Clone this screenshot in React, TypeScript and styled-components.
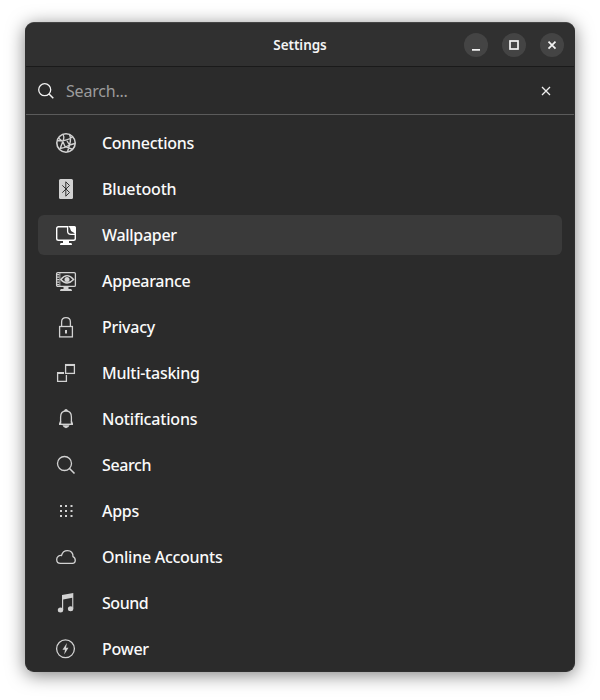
import React from "react";
import styled, { createGlobalStyle } from "styled-components";

const GlobalStyle = createGlobalStyle`
  * { box-sizing: border-box; }
  html, body { margin: 0; background: #fff; overflow: hidden; }
`;

const Desktop = styled.div`
  width: 600px;
  height: 700px;
  padding: 22px 25px 28px;
  background: #fff;
  font-family: "Noto Sans", "Open Sans", sans-serif;
`;

const Window = styled.main`
  display: flex;
  flex-direction: column;
  height: 650px;
  border: 1px solid #2f2f2f;
  border-top-color: #454545;
  border-radius: 9px;
  overflow: hidden;
  background: #2b2b2b;
  box-shadow: 0 3px 18px rgba(0, 0, 0, 0.5);
`;

const TitleBar = styled.header`
  display: grid;
  grid-template-columns: 1fr auto 1fr;
  align-items: center;
  flex: none;
  height: 44px;
  padding: 0 10px;
  background: #303030;
  border-bottom: 1px solid #1a1a1a;
`;

const Title = styled.h1`
  grid-column: 2;
  margin: 0;
  color: #f4f4f4;
  font-size: 13.5px;
  line-height: 20px;
  font-weight: 600;
  letter-spacing: -0.05px;
`;

const Controls = styled.div`
  display: flex;
  justify-content: flex-end;
  gap: 14px;
`;

const ControlButton = styled.button`
  display: grid;
  place-items: center;
  width: 24px;
  height: 24px;
  padding: 0;
  border: 0;
  border-radius: 50%;
  background: #444;
  color: #f2f2f2;
`;

const SearchBar = styled.div`
  display: flex;
  align-items: center;
  flex: none;
  height: 48px;
  padding: 0 22px 0 12px;
  border-bottom: 1px solid #5b5b5b;
  color: #f2f2f2;
`;

const SearchInput = styled.input`
  flex: 1;
  min-width: 0;
  margin-left: 12px;
  padding: 0;
  border: 0;
  outline: 0;
  background: transparent;
  color: #fff;
  font: 400 16px/24px "Noto Sans", sans-serif;
  letter-spacing: -0.2px;
  &::placeholder { color: #9c9c9c; opacity: 1; }
`;

const ClearButton = styled.button`
  display: flex;
  padding: 0;
  border: 0;
  background: none;
  color: #eee;
`;

const List = styled.nav`
  display: flex;
  flex-direction: column;
  gap: 6px;
  padding: 8px 12px 0;
`;

const Row = styled.a<{ $active?: boolean }>`
  display: flex;
  align-items: center;
  gap: 26px;
  flex: none;
  height: 40px;
  padding-left: 18px;
  border-radius: 6px;
  background: ${(p) => (p.$active ? "#3a3a3a" : "transparent")};
  color: ${(p) => (p.$active ? "#fff" : "#d2d2d2")};
`;

const Label = styled.span<{ $tracking: number }>`
  color: #fafafa;
  font-size: 16px;
  line-height: 24px;
  font-weight: 500;
  white-space: nowrap;
  letter-spacing: ${(p) => p.$tracking}px;
`;

const Glyph = styled.svg`
  display: block;
  flex: none;
  overflow: visible;
  fill: none;
  stroke: currentColor;
  stroke-width: 1.3;
`;

const solid = { fill: "currentColor", stroke: "none" };

const icons: Record<string, React.ReactNode> = {
  Connections: (
    <g>
      <circle cx="10" cy="10" r="9.2" strokeWidth="1.6" />
      <path d="M7 1.500Q8.500 4 7.500 6.500L4 16M1 7.500Q9 9 16.500 4M13.500 1.500Q15.500 6 13.500 12L11.500 19M2.500 5L7 9L9 13.500L17 16.500M13.500 12L19 10.500M4 15.500Q9 15 13.500 12L11 8" strokeWidth="1.400" />
    </g>
  ),
  Bluetooth: (
    <g>
      <rect x="3" y="0" width="14" height="20" rx="1.5" {...solid} />
      <path d="M6.300 6.300L13.500 13.500L9.800 17.200V2.800L13.500 6.500L6.300 13.700" stroke="#2b2b2b" strokeWidth=".95" />
    </g>
  ),
  Wallpaper: (
    <g>
      <path d="M12 1.700H2.500Q.7 1.700 .7 3.500V13.500Q.7 15.300 2.500 15.300H17.500Q19.300 15.300 19.300 13.500V8" strokeWidth="1.4" />
      <path d="M12 1H18.500Q20 1 20 2.500V9.500L17.500 7.500Q14.500 6.500 14 3Z" {...solid} />
      <path d="M11.600 1.500V6Q11.600 9.400 15 9.400H19.500" />
      <path d="M7 16H13V18H15Q16 18 16 20H4Q4 18 5 18H7Z" {...solid} />
    </g>
  ),
  Appearance: (
    <g>
      <rect x=".6" y="1.600" width="18.800" height="13.800" rx="1.200" />
      <path d="M3.900 2V15" strokeWidth=".8" />
      <path d="M2.200 3V15" strokeWidth="2.200" strokeDasharray="1.200 1.300" />
      <path d="M4.800 8.500Q11 .8 17.600 8.500Q11 15.500 4.800 8.500Z" strokeWidth="1.400" />
      <circle cx="11" cy="8.500" r="2.500" {...solid} />
      <path d="M7.500 15.500H12.500V18H15Q16 18.500 16 20H4Q4 18.500 5 18H7.500Z" {...solid} />
    </g>
  ),
  Privacy: (
    <g>
      <path d="M5.600 9V5Q5.600 .7 10 .7T14.400 5V9" />
      <rect x="3.600" y="9.500" width="12.800" height="10.400" />
      <rect x="9" y="13" width="2" height="3.500" {...solid} />
    </g>
  ),
  "Multi-tasking": (
    <g>
      <rect x="9.600" y="1.600" width="8.800" height="8.800" />
      <path d="M9 2H19M1 10H8" strokeWidth="2" />
      <path d="M8 9.600H1.600V18.400H10.400V12" />
    </g>
  ),
  Notifications: (
    <g>
      <path d="M4.600 15V8Q4.600 2 10 2T15.400 8V15" />
      <path d="M3 15.300H17" strokeWidth="1.400" />
      <path d="M8 2Q8.500 0 10 0T12 2ZM6.500 16.300H13.500Q12.500 19.200 10 19.200T6.500 16.300Z" {...solid} />
      <path d="M4.700 12L3.500 15M15.300 12L16.500 15" />
    </g>
  ),
  Search: (
    <g>
      <circle cx="8.500" cy="8.500" r="7" />
      <path d="M13.500 13.500L18.500 18.500" strokeWidth="1.600" />
    </g>
  ),
  Apps: (
    <g {...solid}>
      {[4, 9, 14.500].flatMap((x) =>
        [4, 9, 14].map((y) => <rect key={`${x}-${y}`} x={x} y={y} width="2" height="2" />)
      )}
    </g>
  ),
  "Online Accounts": (
    <path d="M4.500 16.400C2.200 16.400 .7 14.800 .7 12.500C.7 10 2.700 8.200 5.500 8.500C6.300 5.500 8.500 3.700 11.500 3.700C15 3.700 17.200 6 17 9.700C20 11 20.200 16.400 16.500 16.400Z" />
  ),
  Sound: (
    <g {...solid}>
      <path d="M6 2L17.300 0V15.500H16.200V4.800L7.200 6.500V17H6Z" />
      <ellipse cx="4.500" cy="17" rx="2.700" ry="2.500" />
      <ellipse cx="14.600" cy="15.800" rx="2.700" ry="2.500" />
    </g>
  ),
  Power: (
    <g>
      <circle cx="9.500" cy="9.800" r="8.900" />
      <path d="M10.900 4L6.500 10.700H9L8.200 15.500L12.500 8.800H10Z" {...solid} />
    </g>
  ),
};

const sections = [
  { name: "Connections", tracking: -0.29 },
  { name: "Bluetooth", tracking: -0.15 },
  { name: "Wallpaper", tracking: -0.3 },
  { name: "Appearance", tracking: -0.3 },
  { name: "Privacy", tracking: -0.25 },
  { name: "Multi-tasking", tracking: -0.25 },
  { name: "Notifications", tracking: -0.18 },
  { name: "Search", tracking: -0.37 },
  { name: "Apps", tracking: -0.3 },
  { name: "Online Accounts", tracking: -0.27 },
  { name: "Sound", tracking: -0.45 },
  { name: "Power", tracking: -0.25 },
];

export default function App() {
  return (
    <Desktop>
      <GlobalStyle />
      <Window>
        <TitleBar>
          <Title>Settings</Title>
          <Controls>
            <ControlButton aria-label="Minimize">
              <Glyph width="12" height="12"><path d="M2 10.800H10" strokeWidth="1.800" /></Glyph>
            </ControlButton>
            <ControlButton aria-label="Maximize">
              <Glyph width="12" height="12"><rect x="2" y="2" width="8" height="8" strokeWidth="1.700" /></Glyph>
            </ControlButton>
            <ControlButton aria-label="Close">
              <Glyph width="12" height="12"><path d="M2.500 2.700L9.500 9.700M9.500 2.700L2.500 9.700" strokeWidth="1.700" /></Glyph>
            </ControlButton>
          </Controls>
        </TitleBar>
        <SearchBar>
          <Glyph width="16" height="16">
            <circle cx="6.700" cy="6.700" r="6" strokeWidth="1.300" />
            <path d="M11 11L15.300 15.300" strokeWidth="1.500" />
          </Glyph>
          <SearchInput placeholder="Search..." aria-label="Search settings" />
          <ClearButton aria-label="Clear">
            <Glyph width="12" height="12"><path d="M2 2L10 10M10 2L2 10" strokeWidth="1.300" /></Glyph>
          </ClearButton>
        </SearchBar>
        <List>
          {sections.map(({ name, tracking }) => (
            <Row key={name} $active={name === "Wallpaper"}>
              <Glyph width="20" height="20" viewBox="0 0 20 20">{icons[name]}</Glyph>
              <Label $tracking={tracking}>{name}</Label>
            </Row>
          ))}
        </List>
      </Window>
    </Desktop>
  );
}
